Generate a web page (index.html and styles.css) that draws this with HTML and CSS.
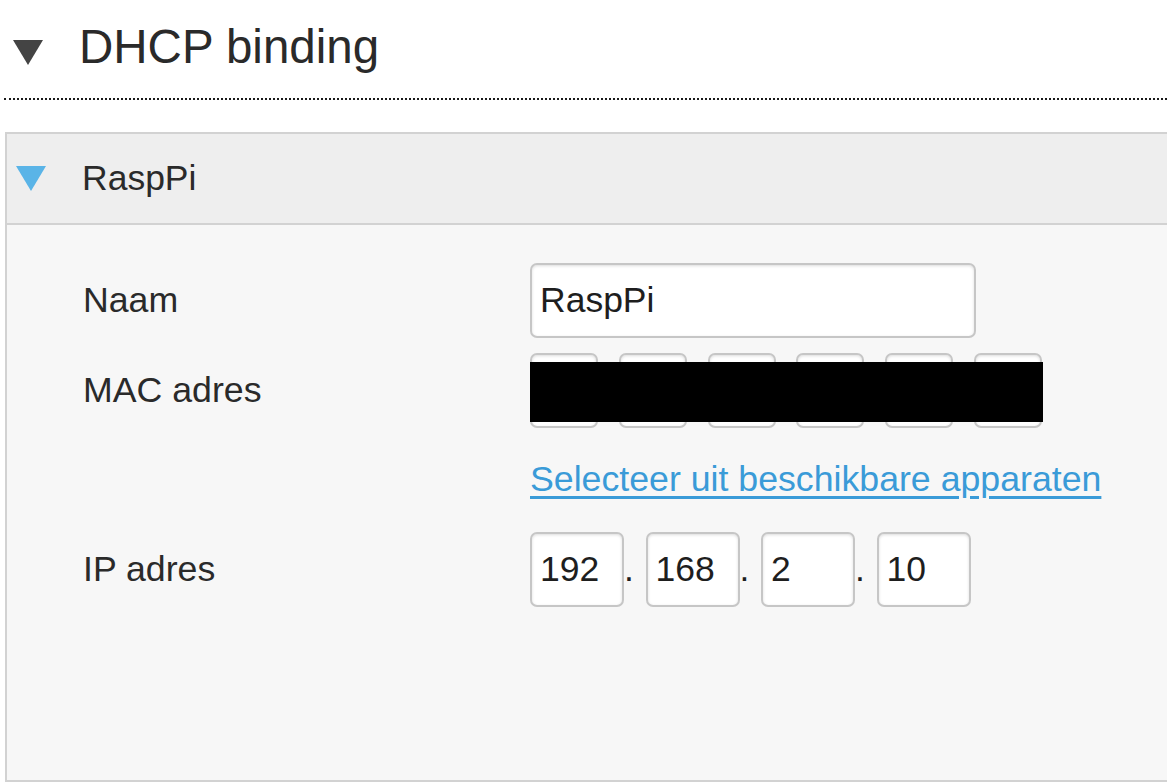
FILE: index.html
```html
<!DOCTYPE html>
<html lang="nl">
<head>
    <meta charset="UTF-8">
    <meta name="viewport" content="width=device-width, initial-scale=1.0">
    <title>DHCP binding</title>
    <link rel="stylesheet" href="styles.css">
</head>
<body>
    <div class="section-title">
        <span class="caret caret-dark"></span>
        <h1>DHCP binding</h1>
    </div>

    <div class="panel">
        <div class="panel-header">
            <span class="caret caret-blue"></span>
            <span class="panel-name">RaspPi</span>
        </div>

        <div class="panel-body">
            <div class="form-row">
                <label class="form-label" for="naam">Naam</label>
                <input class="field field-name" id="naam" type="text" value="RaspPi">
            </div>

            <div class="form-row">
                <label class="form-label">MAC adres</label>
                <div class="mac-group">
                    <input class="field field-mac" type="text">
                    <input class="field field-mac" type="text">
                    <input class="field field-mac" type="text">
                    <input class="field field-mac" type="text">
                    <input class="field field-mac" type="text">
                    <input class="field field-mac" type="text">
                    <div class="redacted"></div>
                </div>
            </div>

            <div class="form-row link-row">
                <span class="form-label"></span>
                <a class="device-link" href="#">Selecteer uit beschikbare apparaten</a>
            </div>

            <div class="form-row">
                <label class="form-label">IP adres</label>
                <div class="ip-group">
                    <input class="field field-ip" type="text" value="192">
                    <span class="ip-dot">.</span>
                    <input class="field field-ip" type="text" value="168">
                    <span class="ip-dot">.</span>
                    <input class="field field-ip" type="text" value="2">
                    <span class="ip-dot">.</span>
                    <input class="field field-ip" type="text" value="10">
                </div>
            </div>
        </div>
    </div>
</body>
</html>
```

FILE: styles.css
```css
html {
    overflow: hidden;
}

body {
    margin: 0;
    background: #ffffff;
    color: #2a2a2a;
    font-family: 'Liberation Sans', Arial, sans-serif;
}

.section-title {
    display: flex;
    align-items: center;
    margin-left: 4px;
    padding: 20px 0 24px 9px;
    border-bottom: 2px dotted #1a1a1a;
}

.section-title h1 {
    margin: 0 0 0 36px;
    font-size: 47.5px;
    font-weight: normal;
    line-height: 54px;
    color: #2a2a2a;
}

.caret {
    display: inline-block;
    width: 0;
    height: 0;
    border-left: 15.5px solid transparent;
    border-right: 15.5px solid transparent;
    border-top: 25px solid #444444;
}

.caret-dark {
    margin-top: 10px;
}

.caret-blue {
    border-top-color: #5ab4e7;
}

.panel {
    margin: 32px 0 0 5px;
    border: 2px solid #d2d2d2;
    border-right: none;
}

.panel-header {
    display: flex;
    align-items: center;
    height: 89px;
    padding-left: 9px;
    background: #eeeeee;
    border-bottom: 2px solid #d2d2d2;
}

.panel-name {
    margin-left: 36px;
    font-size: 35.5px;
}

.panel-body {
    box-sizing: border-box;
    min-height: 555px;
    padding: 38px 0 0 76px;
    background: #f7f7f7;
}

.form-row {
    display: flex;
    align-items: center;
    height: 75px;
    margin-bottom: 15px;
}

.form-label {
    flex: 0 0 447px;
    font-size: 35.7px;
    color: #2a2a2a;
}

.field {
    box-sizing: border-box;
    height: 75px;
    margin: 0;
    padding: 0 8px;
    border: 2px solid #c6c6c6;
    border-radius: 7px;
    background: #ffffff;
    box-shadow: inset 0 1px 3px rgba(0, 0, 0, 0.14);
    font-family: 'Liberation Sans', Arial, sans-serif;
    font-size: 35.5px;
    color: #1e1e1e;
    outline: none;
}

.field-name {
    width: 446px;
}

.mac-group {
    position: relative;
    display: flex;
    gap: 20.8px;
}

.field-mac {
    width: 68px;
}

.redacted {
    position: absolute;
    left: 0;
    top: 9px;
    width: 513px;
    height: 60px;
    background: #000000;
}

.link-row {
    height: 40px;
    margin-top: 31px;
    margin-bottom: 33px;
}

.device-link {
    font-size: 35.7px;
    line-height: 40px;
    color: #3a9bd8;
    text-decoration: underline;
    text-underline-offset: 5px;
}

.ip-group {
    display: flex;
    align-items: baseline;
}

.field-ip {
    width: 94px;
}

.ip-dot {
    width: 21.5px;
    font-size: 35.5px;
    color: #1e1e1e;
}
```
